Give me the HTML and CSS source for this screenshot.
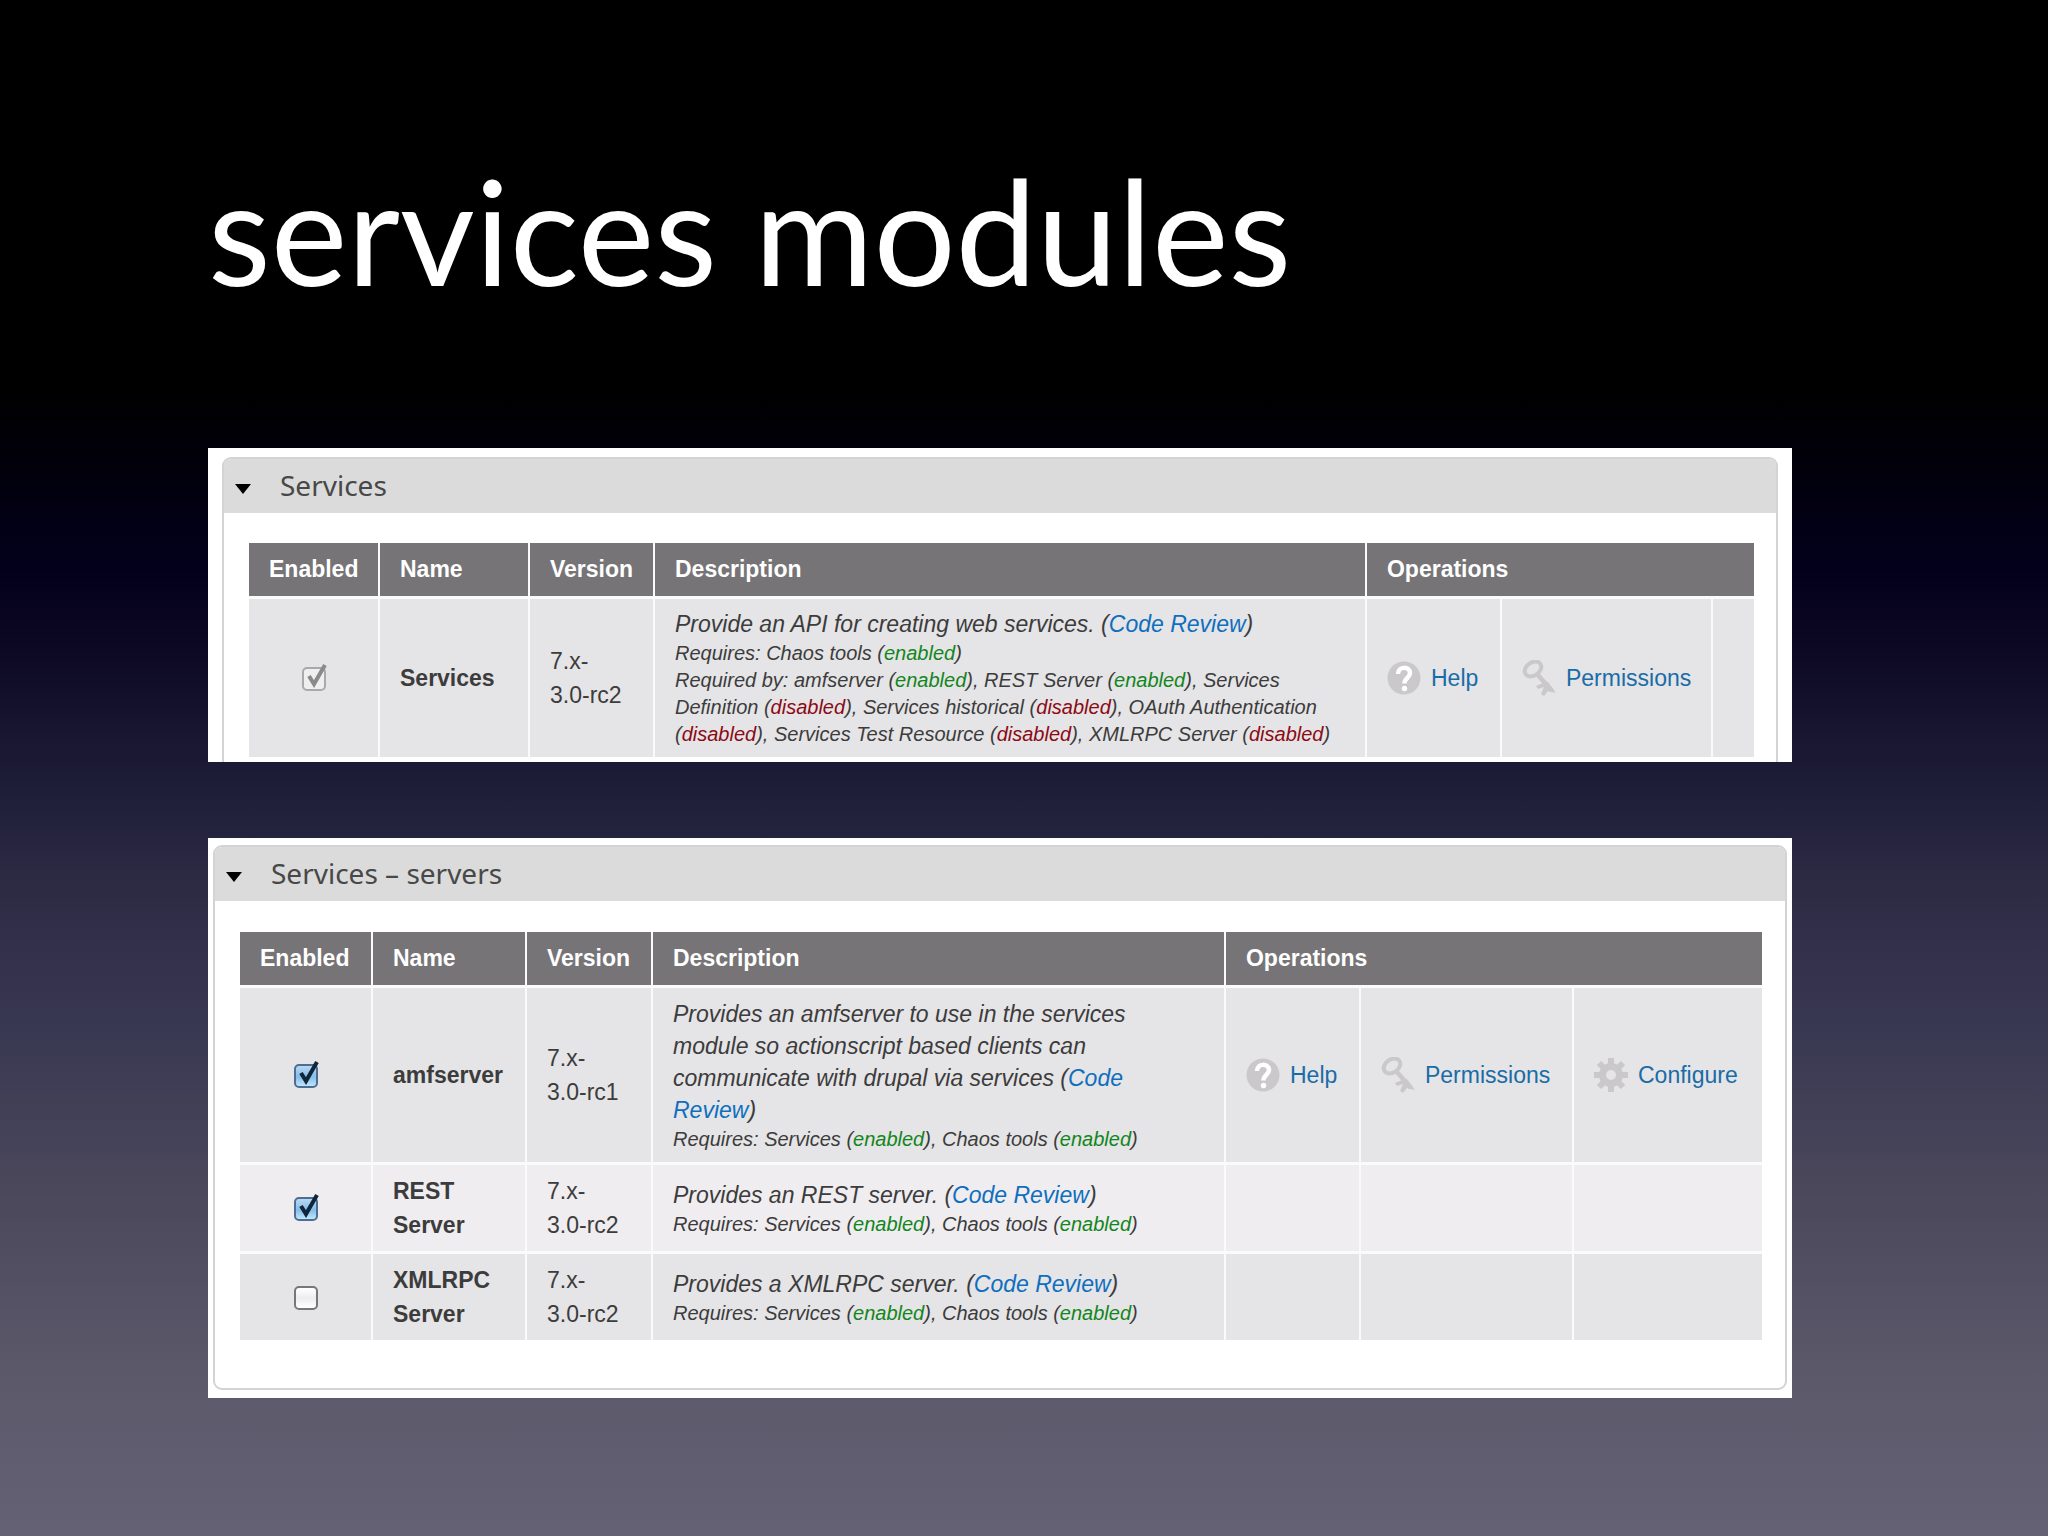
FILE: index.html
```html
<!DOCTYPE html>
<html lang="en">
<head>
<meta charset="utf-8">
<title>services modules</title>
<link rel="stylesheet" href="styles.css">
</head>
<body>
<svg class="sprite" aria-hidden="true">
  <symbol id="tick" viewBox="0 0 28 28"><path d="M7 13 L12 21 L23 2" fill="none" stroke="currentColor" stroke-width="4"/></symbol>
  <symbol id="help" viewBox="0 0 34 36"><circle cx="17" cy="18" r="16.500" fill="#cbc8cb"/><path d="M11 14C11 6 23 6 23 13C23 18 17.500 18 17.500 23.500" fill="none" stroke="#fff" stroke-width="4.500"/><circle cx="17.500" cy="28.500" r="2.700" fill="#fff"/></symbol>
  <symbol id="key" viewBox="0 0 34 36"><g fill="none" stroke="#cbc8cb"><ellipse cx="11" cy="9" rx="9" ry="6.500" transform="rotate(-35 11 9)" stroke-width="4"/><path d="M15 14 L30 31" stroke-width="4.500"/></g><path d="M21 23 L14 26 L16 29 L22 27 L19 34 L22 36 L26 31 L34 33 L26 22Z" fill="#cbc8cb"/></symbol>
  <symbol id="gear" viewBox="0 0 34 36"><g stroke="#cbc8cb" stroke-width="6"><path d="M17 1V9M17 27V35M0 18H8M26 18H34M5 6L11 12M23 24L29 30M29 6L23 12M11 24L5 30"/><circle cx="17" cy="18" r="8.500" fill="none" stroke-width="7"/></g></symbol>
</svg>
<main class="slide">
  <h1 class="title">services modules</h1>

  <section class="panel panel-open">
    <div class="fieldset">
      <h2 class="legend"><button type="button" class="toggle"><span class="arrow"></span>Services</button></h2>
      <table class="modules">
        <colgroup><col class="c-enabled"><col class="c-name"><col class="c-version"><col><col class="c-help"><col class="c-perm"><col class="c-rest"></colgroup>
        <thead><tr><th>Enabled</th><th>Name</th><th>Version</th><th>Description</th><th colspan="3">Operations</th></tr></thead>
        <tbody>
          <tr class="row-core">
            <td><span class="check"><input type="checkbox" id="m-services" checked disabled><svg><use href="#tick"/></svg></span></td>
            <td><label for="m-services">Services</label></td>
            <td class="version">7.x-<br>3.0-rc2</td>
            <td class="desc">
              <p>Provide an API for creating web services. (<a href="#">Code Review</a>)</p>
              <div class="req">Requires: Chaos tools (<span class="on">enabled</span>)</div>
              <div class="req">Required by: amfserver (<span class="on">enabled</span>), REST Server (<span class="on">enabled</span>), Services<br>Definition (<span class="off">disabled</span>), Services historical (<span class="off">disabled</span>), OAuth Authentication<br>(<span class="off">disabled</span>), Services Test Resource (<span class="off">disabled</span>), XMLRPC Server (<span class="off">disabled</span>)</div>
            </td>
            <td><a class="op" href="#"><svg><use href="#help"/></svg>Help</a></td>
            <td><a class="op" href="#"><svg><use href="#key"/></svg>Permissions</a></td>
            <td></td>
          </tr>
        </tbody>
      </table>
    </div>
  </section>

  <section class="panel panel-full">
    <div class="fieldset">
      <h2 class="legend"><button type="button" class="toggle"><span class="arrow"></span>Services – servers</button></h2>
      <table class="modules">
        <colgroup><col class="c-enabled"><col class="c-name"><col class="c-version"><col><col class="c-help"><col class="c-perm"><col class="c-rest"></colgroup>
        <thead><tr><th>Enabled</th><th>Name</th><th>Version</th><th>Description</th><th colspan="3">Operations</th></tr></thead>
        <tbody>
          <tr class="row-amf">
            <td><span class="check"><input type="checkbox" id="m-amf" checked><svg><use href="#tick"/></svg></span></td>
            <td><label for="m-amf">amfserver</label></td>
            <td class="version">7.x-<br>3.0-rc1</td>
            <td class="desc">
              <p>Provides an amfserver to use in the services<br>module so actionscript based clients can<br>communicate with drupal via services (<a href="#">Code<br>Review</a>)</p>
              <div class="req">Requires: Services (<span class="on">enabled</span>), Chaos tools (<span class="on">enabled</span>)</div>
            </td>
            <td><a class="op" href="#"><svg><use href="#help"/></svg>Help</a></td>
            <td><a class="op" href="#"><svg><use href="#key"/></svg>Permissions</a></td>
            <td><a class="op" href="#"><svg><use href="#gear"/></svg>Configure</a></td>
          </tr>
          <tr class="row-short">
            <td><span class="check"><input type="checkbox" id="m-rest" checked><svg><use href="#tick"/></svg></span></td>
            <td><label for="m-rest">REST<br>Server</label></td>
            <td class="version">7.x-<br>3.0-rc2</td>
            <td class="desc">
              <p>Provides an REST server. (<a href="#">Code Review</a>)</p>
              <div class="req">Requires: Services (<span class="on">enabled</span>), Chaos tools (<span class="on">enabled</span>)</div>
            </td>
            <td></td><td></td><td></td>
          </tr>
          <tr class="row-short">
            <td><span class="check"><input type="checkbox" id="m-xmlrpc"></span></td>
            <td><label for="m-xmlrpc">XMLRPC<br>Server</label></td>
            <td class="version">7.x-<br>3.0-rc2</td>
            <td class="desc">
              <p>Provides a XMLRPC server. (<a href="#">Code Review</a>)</p>
              <div class="req">Requires: Services (<span class="on">enabled</span>), Chaos tools (<span class="on">enabled</span>)</div>
            </td>
            <td></td><td></td><td></td>
          </tr>
        </tbody>
      </table>
    </div>
  </section>
</main>
</body>
</html>
```
FILE: styles.css
```css
* { box-sizing: border-box; }
html { min-height: 100%; background: linear-gradient(#000 0%, #000 25%, #01000c 31%, #03001c 37%, #0c0824 42%, #17142f 47%, #1f1f3a 52%, #2c2943 57%, #393852 67%, #4a475b 77%, #5b596a 90%, #646175 100%); }
body { margin: 0; font-family: "Liberation Sans", Arial, sans-serif; font-size: 23px; color: #3c3c3c; }
.sprite { display: none; }
.slide { display: flex; flex-direction: column; gap: 76px; padding: 148px 256px 100px 208px; }
.title { margin: 0 0 60px; font-family: Lato, "Gill Sans", sans-serif; font-weight: 400; font-size: 145px; line-height: 164px; color: #fff; }
.panel { background: #fff; }
.panel-open { padding: 9px 14px 0; }
.panel-full { padding: 7px 5px 8px; }
.fieldset { border: 2px solid #d3d3d5; border-radius: 9px; padding-bottom: 48px; }
.panel-open .fieldset { border-bottom: 0; border-radius: 9px 9px 0 0; padding-bottom: 5px; }
.legend { margin: 0; background: #dbdbdb; border-radius: 7px 7px 0 0; font-size: 28px; font-weight: 400; }
.toggle { display: flex; align-items: center; gap: 29px; width: 100%; height: 54px; padding: 0 11px 3px; border: 0; background: none; font-family: "Noto Sans", "Open Sans", sans-serif; font-size: 28px; color: #484848; text-align: left; }
.arrow { margin-top: 8px; border: 8px solid transparent; border-top: 10px solid #000; border-bottom: 0; }

.modules { width: calc(100% - 47px); margin: 30px 22px 0 25px; table-layout: fixed; border-collapse: separate; border-spacing: 0; }
.panel-full .modules { width: calc(100% - 48px); margin: 31px 23px 0 25px; }
.c-enabled { width: 129px; }
.c-name { width: 150px; }
.c-version { width: 125px; }
.c-help { width: 135px; }
.c-perm { width: 211px; }
.c-rest { width: 43px; }
.panel-full .c-enabled { width: 131px; }
.panel-full .c-name { width: 154px; }
.panel-full .c-version { width: 126px; }
.panel-full .c-perm { width: 213px; }
.panel-full .c-rest { width: 190px; }

th { height: 53px; padding: 0 20px; background: #767476; color: #fff; font-weight: 700; text-align: left; }
td { padding: 0 20px; background: #e5e4e6; border-top: 3px solid #fafafa; vertical-align: middle; }
th + th, td + td { border-left: 2px solid #fafafa; }
tr:nth-child(even) td { background: #efedf0; }
td:first-child { text-align: center; }
td label { font-weight: 700; line-height: 34px; }
.version { line-height: 34px; padding-right: 0; }
.row-core { height: 161px; }
.row-amf { height: 177px; }
.row-short { height: 89px; }
.desc { font-style: italic; padding-right: 0; white-space: nowrap; }
.desc p { margin: 0; line-height: 32px; }
.req { font-size: 20px; line-height: 27px; }
a { color: #0f6fbe; text-decoration: none; }
.on { color: #12861c; }
.off { color: #8c0a14; }
.op { display: flex; align-items: center; gap: 10px; color: #1a6ca6; }
.op svg { width: 34px; height: 36px; flex: none; }

.check { position: relative; display: inline-block; width: 24px; height: 24px; vertical-align: middle; color: #10263a; }
.check input { appearance: none; display: block; width: 24px; height: 24px; margin: 0; border: 2px solid #77777a; border-radius: 5px; background: linear-gradient(#fff, #ededee 50%, #fff); }
.check input:checked { border-color: #4e6d92; background: linear-gradient(#b9d7f3, #86bdeb 55%, #bfe6fb); }
.check input:disabled { border-color: #a9a9ab; background: #efeff0; }
.check input:disabled + svg { color: #8a8a8c; }
.check svg { position: absolute; left: 0; top: -4px; width: 28px; height: 28px; pointer-events: none; }
```
